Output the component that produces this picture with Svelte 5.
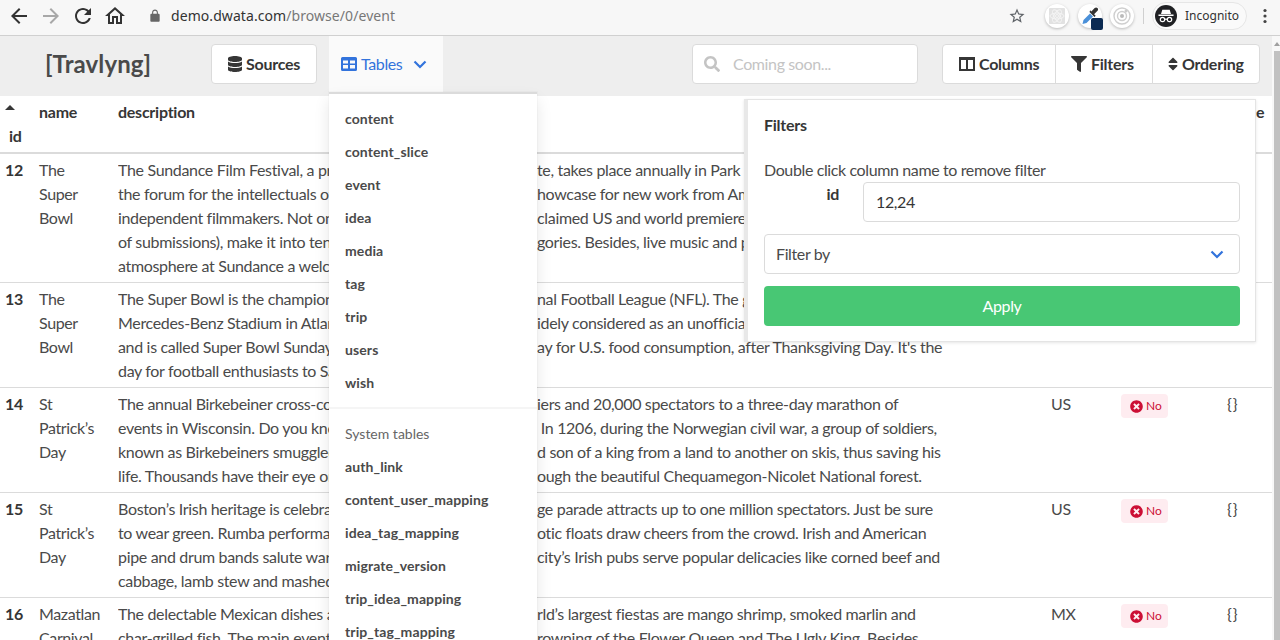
<script>
  const backPath = 'M20 11H7.83l5.59-5.59L12 4l-8 8 8 8 1.41-1.41L7.83 13H20v-2z';
  const rows = [
    { id: 12, name: ['The', 'Super', 'Bowl'], country: '', lines: [
      ['The Sundance Film Festival, a program of the Sundance Institu', 'te, takes place annually in Park City, Utah.'],
      ['the forum for the intellectuals of the film world and a s', 'howcase for new work from American and'],
      ['independent filmmakers. Not only are the films ac', 'claimed US and world premieres, but'],
      ['of submissions), make it into ten different cate', 'gories. Besides, live music and panels make the'],
      ['atmosphere at Sundance a welcome treat.', '']] },
    { id: 13, name: ['The', 'Super', 'Bowl'], country: '', lines: [
      ['The Super Bowl is the championship game of the Natio', 'nal Football League (NFL). The game is at'],
      ['Mercedes-Benz Stadium in Atlanta and it is w', 'idely considered as an unofficial holiday'],
      ['and is called Super Bowl Sunday, the second-largest d', 'ay for U.S. food consumption, after Thanksgiving Day. It\'s the'],
      ['day for football enthusiasts to Savor.', '']] },
    { id: 14, name: ['St', 'Patrick\u2019s', 'Day'], country: 'US', lines: [
      ['The annual Birkebeiner cross-country ski race brings 10,000 sk', 'iers and 20,000 spectators to a three-day marathon of'],
      ['events in Wisconsin. Do you know how the race began?', ' In 1206, during the Norwegian civil war, a group of soldiers,'],
      ['known as Birkebeiners smuggled the infant son of the late kin', 'd son of a king from a land to another on skis, thus saving his'],
      ['life. Thousands have their eye on the prize as they ski thr', 'ough the beautiful Chequamegon-Nicolet National forest.']] },
    { id: 15, name: ['St', 'Patrick\u2019s', 'Day'], country: 'US', lines: [
      ['Boston\u2019s Irish heritage is celebrated with a lar', 'ge parade attracts up to one million spectators. Just be sure'],
      ['to wear green. Rumba performances and ex', 'otic floats draw cheers from the crowd. Irish and American'],
      ['pipe and drum bands salute warmly, and the ', 'city\u2019s Irish pubs serve popular delicacies like corned beef and'],
      ['cabbage, lamb stew and mashed potatoes.', '']] },
    { id: 16, name: ['Mazatlan', 'Carnival'], country: 'MX', lines: [
      ['The delectable Mexican dishes at one of the wo', 'rld\u2019s largest fiestas are mango shrimp, smoked marlin and'],
      ['char-grilled fish. The main event includes the c', 'rowning of the Flower Queen and The Ugly King. Besides,']] }
  ];
  const tables = ['content', 'content_slice', 'event', 'idea', 'media', 'tag', 'trip', 'users', 'wish'];
  const systemTables = ['auth_link', 'content_user_mapping', 'idea_tag_mapping', 'migrate_version', 'trip_idea_mapping', 'trip_tag_mapping'];
</script>

<div class="page">
  <header class="chrome">
    <div class="nav-icons">
      <svg class="c-ico" viewBox="0 0 24 24"><path d={backPath} fill="#333" /></svg>
      <svg class="c-ico" viewBox="0 0 24 24"><path d="M12 4l-1.41 1.41L16.17 11H4v2h12.17l-5.58 5.59L12 20l8-8z" fill="#a8a8a8" /></svg>
      <svg class="c-ico" viewBox="0 0 24 24"><path d="M17.65 6.35C16.2 4.9 14.21 4 12 4c-4.42 0-7.99 3.58-7.99 8s3.57 8 7.99 8c3.73 0 6.84-2.55 7.73-6h-2.08c-.82 2.33-3.04 4-5.65 4-3.31 0-6-2.69-6-6s2.69-6 6-6c1.66 0 3.14.69 4.22 1.78L13 11h7V4l-2.35 2.35z" fill="#333" /></svg>
      <svg class="c-ico" viewBox="0 0 24 24"><path d="M12 5.69l5 4.5V18h-2v-6H9v6H7v-7.81l5-4.5M12 3L2 12h3v8h6v-6h2v6h6v-8h3L12 3z" fill="#333" /></svg>
    </div>
    <svg class="lock" viewBox="0 0 24 24"><path d="M18 8h-1V6c0-2.76-2.24-5-5-5S7 3.24 7 6v2H6c-1.1 0-2 .9-2 2v10c0 1.1.9 2 2 2h12c1.1 0 2-.9 2-2V10c0-1.1-.9-2-2-2zm-2.9 0H8.9V6c0-1.71 1.39-3.1 3.1-3.1 1.71 0 3.1 1.39 3.1 3.1v2z" fill="#666" /></svg>
    <div class="url">demo.dwata.com<span>/browse/0/event</span></div>
    <svg class="star" viewBox="0 0 24 24"><path d="M22 9.24l-7.19-.62L12 2 9.19 8.63 2 9.24l5.46 4.73L5.82 21 12 17.27 18.18 21l-1.63-7.03L22 9.24zM12 15.4l-3.76 2.27 1-4.28-3.32-2.88 4.38-.38L12 6.1l1.71 4.04 4.38.38-3.32 2.88 1 4.28L12 15.4z" fill="#5f6368" /></svg>
    <div class="exts">
      <div class="ext">
        <svg viewBox="0 0 20 20" width="20" height="20"><rect x="2" y="2" width="16" height="16" rx="1" fill="#e2e2e2" /><g fill="none" stroke="#f4f4f4"><circle cx="10" cy="10" r="1.5" /><ellipse cx="10" cy="10" rx="7" ry="3" /><ellipse cx="10" cy="10" rx="7" ry="3" transform="rotate(60 10 10)" /><ellipse cx="10" cy="10" rx="7" ry="3" transform="rotate(120 10 10)" /></g></svg>
      </div>
      <div class="ext">
        <svg viewBox="0 0 20 20" width="20" height="20"><path d="M2.500 18l1-4 6.500-6.500 3 3L6.500 17z" fill="#4a90d9" /><path d="M9.500 6l5 5 1.200-1.200-1.600-1.600 3.400-3.400c.8-.8.8-2 0-2.800s-2-.8-2.800 0l-3.400 3.400-1.100-1.100z" fill="#333" /></svg>
        <span class="ext-badge"></span>
      </div>
      <div class="ext">
        <svg viewBox="0 0 20 20" width="20" height="20"><g fill="none" stroke="#cfcfcf" stroke-width="1.4"><circle cx="10" cy="10" r="8" /><circle cx="10" cy="10" r="4.5" /></g><circle cx="10" cy="10" r="2" fill="#bbb" /><circle cx="14" cy="5" r="1.500" fill="#ccc" /></svg>
      </div>
    </div>
    <div class="sep"></div>
    <div class="incognito">
      <span class="inc-ico">
        <svg viewBox="0 0 22 22" width="22" height="22"><path d="M6 9l1.300-4.200h7.400L16 9zM3.500 9.600h15v1.300h-15z" fill="#fff" /><g fill="none" stroke="#fff" stroke-width="1.200"><circle cx="7.500" cy="14.500" r="2.200" /><circle cx="14.500" cy="14.500" r="2.200" /><path d="M9.700 14.200h2.600" /></g></svg>
      </span>
      <span class="inc-label">Incognito</span>
    </div>
    <svg class="dots" viewBox="0 0 4 16"><circle cx="2" cy="2.500" r="1.600" /><circle cx="2" cy="8" r="1.600" /><circle cx="2" cy="13.500" r="1.600" /></svg>
  </header>

  <div class="body-row">
    <div class="app">
      <nav class="navbar">
        <div class="brand">[Travlyng]</div>
        <button class="btn sources">
          <svg class="fa" viewBox="0 0 448 512"><path d="M448 73.143v45.714C448 159.143 347.667 192 224 192S0 159.143 0 118.857V73.143C0 32.857 100.333 0 224 0s224 32.857 224 73.143zM448 176v102.857C448 319.143 347.667 352 224 352S0 319.143 0 278.857V176c48.125 33.143 136.208 48.572 224 48.572S399.874 209.143 448 176zm0 160v102.857C448 479.143 347.667 512 224 512S0 479.143 0 438.857V336c48.125 33.143 136.208 48.572 224 48.572S399.874 369.143 448 336z" /></svg>
          Sources
        </button>
        <div class="tables-tab">
          <svg class="fa table-ico" viewBox="0 0 16 14"><path fill-rule="evenodd" d="M1.500 0h13A1.500 1.500 0 0 1 16 1.500v11a1.500 1.500 0 0 1-1.500 1.500h-13A1.500 1.500 0 0 1 0 12.500v-11A1.500 1.500 0 0 1 1.500 0zM2 3.500v3h5v-3zm7 0v3h5v-3zM2 8v3.500h5V8zm7 0v3.500h5V8z" /></svg>
          <span>Tables</span>
          <svg class="chev" viewBox="0 0 14 9"><path d="M1.500 1.500L7 7l5.500-5.500" fill="none" stroke="currentColor" stroke-width="2.200" /></svg>
        </div>
        <div class="search">
          <svg class="fa" viewBox="0 0 512 512"><path d="M505 442.700L405.300 343c-4.500-4.500-10.600-7-17-7H372c27.600-35.300 44-79.700 44-128C416 93.100 322.900 0 208 0S0 93.100 0 208s93.100 208 208 208c48.300 0 92.700-16.400 128-44v16.300c0 6.400 2.500 12.500 7 17l99.700 99.700c9.400 9.400 24.600 9.400 33.900 0l28.300-28.300c9.400-9.400 9.400-24.600.1-34zM208 336c-70.700 0-128-57.200-128-128 0-70.700 57.200-128 128-128 70.700 0 128 57.200 128 128 0 70.700-57.200 128-128 128z" /></svg>
          <span>Coming soon...</span>
        </div>
        <div class="btn-group">
          <button class="btn">
            <svg class="fa" viewBox="0 0 16 14"><path fill-rule="evenodd" d="M0 0h16v14H0zM2 3v9h5V3zm7 0v9h5V3z" /></svg>
            Columns
          </button>
          <button class="btn">
            <svg class="fa" viewBox="0 0 512 512"><path d="M487.976 0H24.028C2.710 0-8.047 25.866 7.058 40.971L192 225.941V432c0 7.831 3.821 15.170 10.237 19.662l80 55.980C298.020 518.690 320 507.493 320 487.980V225.941l184.947-184.970C520.021 25.896 509.338 0 487.976 0z" /></svg>
            Filters
          </button>
          <button class="btn">
            <svg class="fa sort" viewBox="0 0 320 512"><path d="M41 288h238c21.400 0 32.100 25.900 17 41L177 448c-9.400 9.400-24.600 9.400-33.900 0L24 329c-15.100-15.100-4.400-41 17-41zm255-105L177 64c-9.400-9.400-24.600-9.400-33.900 0L24 183c-15.100 15.100-4.400 41 17 41h238c21.400 0 32.100-25.900 17-41z" /></svg>
            Ordering
          </button>
        </div>
      </nav>

      <main class="content">
        <table>
          <colgroup>
            <col class="c-id" /><col class="c-name" /><col class="c-desc" /><col class="c-country" /><col class="c-tag" /><col />
          </colgroup>
          <thead>
            <tr>
              <th class="id-head"><span class="caret"></span><span class="id-label">id</span></th>
              <th>name</th>
              <th>description</th>
              <th></th>
              <th></th>
              <th class="last-head">e</th>
            </tr>
          </thead>
          <tbody>
            {#each rows as row}
              <tr>
                <td class="id">{row.id}</td>
                <td>{#each row.name as n}<div>{n}</div>{/each}</td>
                <td>{#each row.lines as line}<div class="line"><span class="l">{line[0]}</span><span class="r">{line[1]}</span></div>{/each}</td>
                <td>{row.country}</td>
                <td>
                  {#if row.country}
                    <span class="tag">
                      <svg viewBox="0 0 512 512"><path d="M256 8C119 8 8 119 8 256s111 248 248 248 248-111 248-248S393 8 256 8zm121.600 313.100c4.700 4.700 4.700 12.300 0 17L338 377.600c-4.700 4.700-12.300 4.700-17 0L256 312l-65.100 65.600c-4.700 4.700-12.300 4.700-17 0L134.400 338c-4.700-4.700-4.700-12.300 0-17l65.600-65-65.600-65.100c-4.700-4.700-4.700-12.300 0-17l39.600-39.600c4.700-4.700 12.300-4.700 17 0l65 65.700 65.100-65.600c4.700-4.700 12.300-4.700 17 0l39.600 39.600c4.700 4.700 4.700 12.300 0 17L312 256l65.600 65.100z" /></svg>
                      <span>No</span>
                    </span>
                  {/if}
                </td>
                <td class="json">{row.country ? '{}' : ''}</td>
              </tr>
            {/each}
          </tbody>
        </table>

        <div class="dropdown">
          {#each tables as t}<div class="dd-item">{t}</div>{/each}
          <hr />
          <div class="dd-label">System tables</div>
          {#each systemTables as t}<div class="dd-item">{t}</div>{/each}
        </div>

        <section class="filters">
          <h4>Filters</h4>
          <p>Double click column name to remove filter</p>
          <div class="field">
            <label for="flt-id">id</label>
            <input id="flt-id" value="12,24" />
          </div>
          <div class="select">
            <span>Filter by</span>
            <svg class="chev" viewBox="0 0 14 9"><path d="M1.500 1.500L7 7l5.500-5.500" fill="none" stroke="currentColor" stroke-width="2.200" /></svg>
          </div>
          <button class="apply">Apply</button>
        </section>
      </main>
    </div>
    <aside class="scrollbar">
      <div class="sb-arrow"></div>
      <div class="sb-thumb"></div>
    </aside>
  </div>
</div>

<style>
  :global(body) {
    margin: 0;
    overflow: hidden;
    background: #fff;
  }
  .page {
    width: 1280px;
    height: 640px;
    overflow: hidden;
    display: flex;
    flex-direction: column;
    font-family: Lato, "Noto Sans", sans-serif;
    font-size: 16px;
    line-height: 24px;
    letter-spacing: -0.38px;
    color: #4a4a4a;
  }

  /* browser chrome */
  .chrome {
    height: 36px;
    box-sizing: border-box;
    flex: none;
    border-bottom: 1px solid #d0d0d0;
    background: #f7f7f7;
    display: flex;
    align-items: center;
    padding: 0 13px 3px 0;
    font-family: "Noto Sans", sans-serif;
    letter-spacing: 0;
  }
  .nav-icons {
    display: flex;
    gap: 8px;
    margin-left: 7px;
  }
  .c-ico {
    width: 24px;
    height: 24px;
  }
  .lock {
    width: 14px;
    height: 14px;
    margin-left: 21px;
  }
  .url {
    margin-left: 9px;
    font-size: 14px;
    letter-spacing: 0.07px;
    color: #333;
    flex: 1;
  }
  .url span {
    color: #777;
  }
  .star {
    width: 18px;
    height: 18px;
    margin-right: 19px;
  }
  .exts {
    display: flex;
    gap: 8.5px;
  }
  .ext {
    position: relative;
    width: 24px;
    height: 24px;
    border-radius: 50%;
    background: #fff;
    box-shadow: 0 1px 3px rgba(0, 0, 0, 0.25);
    display: flex;
    align-items: center;
    justify-content: center;
  }
  .ext-badge {
    position: absolute;
    right: -1px;
    bottom: -2px;
    width: 12px;
    height: 12px;
    border-radius: 2px;
    background: #0b2a52;
  }
  .sep {
    width: 1px;
    height: 16px;
    background: #d0d0d0;
    margin: 0 8px 0 9px;
  }
  .incognito {
    display: flex;
    align-items: center;
    width: 93px;
    height: 26px;
    border: 1px solid #e6e6e6;
    border-radius: 14px;
    background: #fafafa;
  }
  .inc-ico {
    width: 22px;
    height: 22px;
    margin-left: 2px;
    border-radius: 50%;
    background: #202124;
    display: flex;
  }
  .inc-label {
    font-size: 12px;
    color: #333;
    margin-left: 8px;
  }
  .dots {
    width: 4px;
    height: 16px;
    margin-left: 16px;
    fill: #444;
  }

  /* body */
  .body-row {
    flex: 1;
    min-height: 0;
    display: flex;
  }
  .app {
    flex: 1;
    min-width: 0;
    display: flex;
    flex-direction: column;
  }
  .scrollbar {
    width: 8px;
    flex: none;
    background: #f8f8f8;
    display: flex;
    flex-direction: column;
    padding-left: 2px;
    box-sizing: border-box;
  }
  .sb-arrow {
    height: 15px;
    flex: none;
    position: relative;
  }
  .sb-arrow::after {
    content: "";
    position: absolute;
    left: 0;
    top: 6px;
    border: 3px solid transparent;
    border-top: 0;
    border-bottom: 4px solid #a0a0a0;
  }
  .sb-thumb {
    flex: 1;
    background: #c1c1c1;
  }

  /* navbar */
  .navbar {
    height: 60px;
    box-sizing: border-box;
    padding-bottom: 4px;
    flex: none;
    background: #eee;
    display: flex;
    align-items: center;
  }
  .brand {
    width: 211px;
    box-sizing: border-box;
    padding-left: 45px;
    font-size: 24px;
    font-weight: 700;
    letter-spacing: 0.1px;
    color: #4a4a4a;
  }
  .btn {
    height: 40px;
    padding: 0 15px;
    border: 1px solid #dbdbdb;
    border-radius: 4px;
    background: #fff;
    font: inherit;
    font-weight: 700;
    letter-spacing: -0.25px;
    color: #363636;
    display: flex;
    align-items: center;
    gap: 4px;
    white-space: nowrap;
  }
  .sources {
    width: 106px;
    margin-right: 12px;
    padding: 0 0 0 15px;
    gap: 3px;
  }
  .fa {
    width: 16px;
    height: 16px;
    fill: currentColor;
    flex: none;
  }
  .tables-tab {
    width: 114px;
    height: 56px;
    box-sizing: border-box;
    align-self: flex-start;
    background: #fafafa;
    padding: 0 0 0 12px;
    display: flex;
    align-items: center;
    color: #3273dc;
  }
  .table-ico {
    margin-right: 4px;
  }
  .chev {
    width: 14px;
    height: 9px;
    color: #3273dc;
  }
  .tables-tab .chev {
    margin-left: 11px;
  }
  .search {
    width: 226px;
    height: 40px;
    box-sizing: border-box;
    margin-left: 249px;
    border: 1px solid #dbdbdb;
    border-radius: 4px;
    background: #fff;
    color: #c4c4c4;
    display: flex;
    align-items: center;
    padding-left: 11px;
  }
  .search span {
    margin-left: 13px;
  }
  .btn-group {
    display: flex;
    margin-left: 24px;
  }
  .btn-group .btn {
    border-radius: 0;
    margin-left: -1px;
  }
  .btn-group .btn:first-child {
    border-radius: 4px 0 0 4px;
    margin-left: 0;
    padding: 0 16px;
    width: 114px;
  }
  .btn-group .btn:nth-child(2) {
    width: 98px;
  }
  .btn-group .btn:last-child {
    border-radius: 0 4px 4px 0;
    width: 108px;
  }
  .sort {
    width: 10px;
  }

  /* table */
  .content {
    position: relative;
    flex: 1;
    min-height: 0;
    overflow: visible;
    background: #fff;
  }
  table {
    width: 100%;
    table-layout: fixed;
    border-collapse: collapse;
  }
  .c-id { width: 34px; }
  .c-name { width: 79px; }
  .c-desc { width: 933px; }
  .c-country { width: 70px; }
  .c-tag { width: 106px; }
  th,
  td {
    padding: 4px 5px;
    text-align: left;
    vertical-align: top;
    white-space: nowrap;
  }
  th {
    font-weight: 700;
    letter-spacing: -0.25px;
    color: #363636;
    border-bottom: 2px solid #dbdbdb;
    height: 48px;
    box-sizing: content-box;
  }
  td {
    border-bottom: 1px solid #dbdbdb;
  }
  .caret {
    display: block;
    width: 0;
    height: 0;
    border: 5px solid transparent;
    border-top: 0;
    border-bottom: 5px solid #363636;
    margin-top: 5px;
  }
  .id-label {
    display: block;
    margin-top: 14px;
    margin-left: 4px;
  }
  .last-head {
    padding-left: 34px;
  }
  .id {
    font-weight: 700;
    letter-spacing: -0.25px;
    color: #363636;
  }
  .line {
    display: flex;
    white-space: pre;
    letter-spacing: -0.33px;
  }
  .l {
    flex: none;
    width: 419px;
    overflow: hidden;
  }
  .tag {
    display: inline-flex;
    align-items: center;
    gap: 3px;
    height: 24px;
    width: 47px;
    box-sizing: border-box;
    padding-left: 9px;
    margin-top: 2px;
    vertical-align: top;
    border-radius: 4px;
    background: #feecf0;
    color: #cc0f35;
    font-size: 12px;
    letter-spacing: 0;
  }
  .tag svg {
    width: 13px;
    height: 13px;
    fill: currentColor;
  }
  .json {
    letter-spacing: 1px;
  }

  /* dropdown */
  .dropdown {
    position: absolute;
    left: 329px;
    top: -4px;
    width: 208px;
    box-sizing: border-box;
    background: #fff;
    padding: 8px 0;
    border-top: 2px solid #dbdbdb;
    border-radius: 0 0 4px 4px;
    box-shadow: 0 8px 16px rgba(10, 10, 10, 0.1), 0 0 0 1px rgba(10, 10, 10, 0.02);
    font-size: 14px;
    letter-spacing: 0;
  }
  .dd-item {
    height: 33px;
    line-height: 33px;
    padding-left: 16px;
    font-weight: 700;
    letter-spacing: 0.1px;
    color: #4a4a4a;
  }
  hr {
    margin: 8px 0;
    border: 0;
    height: 2px;
    background: #f5f5f5;
  }
  .dd-label {
    height: 33px;
    line-height: 33px;
    padding-left: 16px;
    color: #666;
  }

  /* filters */
  .filters {
    position: absolute;
    left: 744px;
    top: 3px;
    width: 512px;
    height: 243px;
    box-sizing: border-box;
    padding: 13px 15px 0 16px;
    background: #fff;
    border: 1px solid #e4e4e4;
    border-left: 4px solid #e8e8e8;
    box-shadow: 0 1px 3px rgba(10, 10, 10, 0.1);
  }
  h4 {
    margin: 0;
    font-size: 16px;
    font-weight: 700;
    letter-spacing: -0.25px;
    color: #363636;
  }
  .filters p {
    margin: 21px 0 0;
  }
  .field {
    display: flex;
  }
  .field label {
    width: 99px;
    padding-right: 24px;
    box-sizing: border-box;
    text-align: right;
    font-weight: 700;
    color: #363636;
  }
  input {
    width: 377px;
    height: 40px;
    box-sizing: border-box;
    border: 1px solid #dbdbdb;
    border-radius: 4px;
    padding: 0 11px 2px 12px;
    font: inherit;
    letter-spacing: inherit;
    color: #363636;
    outline: none;
  }
  .select {
    margin-top: 12px;
    width: 476px;
    height: 40px;
    box-sizing: border-box;
    border: 1px solid #dbdbdb;
    border-radius: 4px;
    padding: 0 15px 0 11px;
    display: flex;
    align-items: center;
    justify-content: space-between;
  }
  .apply {
    display: block;
    margin-top: 12px;
    width: 476px;
    height: 40px;
    border: 0;
    border-radius: 4px;
    background: #48c774;
    color: #fff;
    font: inherit;
    letter-spacing: inherit;
  }
</style>
